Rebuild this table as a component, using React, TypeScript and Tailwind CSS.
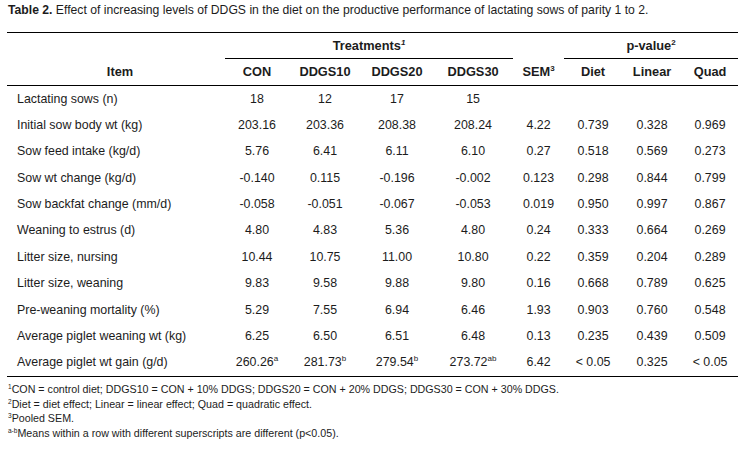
import React from "react";

type Row = {
  item: string;
  values: React.ReactNode[];
};

const sup = (s: string) => (
  <span className="relative -top-[5px] text-[8px] leading-none">{s}</span>
);

const rows: Row[] = [
  { item: "Lactating sows (n)", values: ["18", "12", "17", "15", "", "", "", ""] },
  { item: "Initial sow body wt (kg)", values: ["203.16", "203.36", "208.38", "208.24", "4.22", "0.739", "0.328", "0.969"] },
  { item: "Sow feed intake (kg/d)", values: ["5.76", "6.41", "6.11", "6.10", "0.27", "0.518", "0.569", "0.273"] },
  { item: "Sow wt change (kg/d)", values: ["-0.140", "0.115", "-0.196", "-0.002", "0.123", "0.298", "0.844", "0.799"] },
  { item: "Sow backfat change (mm/d)", values: ["-0.058", "-0.051", "-0.067", "-0.053", "0.019", "0.950", "0.997", "0.867"] },
  { item: "Weaning to estrus (d)", values: ["4.80", "4.83", "5.36", "4.80", "0.24", "0.333", "0.664", "0.269"] },
  { item: "Litter size, nursing", values: ["10.44", "10.75", "11.00", "10.80", "0.22", "0.359", "0.204", "0.289"] },
  { item: "Litter size, weaning", values: ["9.83", "9.58", "9.88", "9.80", "0.16", "0.668", "0.789", "0.625"] },
  { item: "Pre-weaning mortality (%)", values: ["5.29", "7.55", "6.94", "6.46", "1.93", "0.903", "0.760", "0.548"] },
  { item: "Average piglet weaning wt (kg)", values: ["6.25", "6.50", "6.51", "6.48", "0.13", "0.235", "0.439", "0.509"] },
  {
    item: "Average piglet wt gain (g/d)",
    values: [
      <>260.26{sup("a")}</>,
      <>281.73{sup("b")}</>,
      <>279.54{sup("b")}</>,
      <>273.72{sup("ab")}</>,
      "6.42",
      "< 0.05",
      "0.325",
      "< 0.05",
    ],
  },
];

const widths = ["w-[218px]", "w-[64px]", "w-[72px]", "w-[72px]", "w-[80px]", "w-[51px]", "w-[58px]", "w-[60px]", "w-[56px]"];

const fnSup = (s: string) => (
  <span className="relative -top-[4px] text-[6.5px] leading-none">{s}</span>
);

export default function App() {
  return (
    <div
      className="w-[745px] h-[451px] bg-white text-[#1c1c1c] overflow-hidden"
      style={{ fontFamily: '"Liberation Sans", Arial, sans-serif' }}
    >
      <p className="pl-[8px] pt-[3px] text-[12.2px] leading-[14px]">
        <span className="font-bold">Table 2.</span> Effect of increasing levels of DDGS in the diet on the productive
        performance of lactating sows of parity 1 to 2.
      </p>

      <table className="ml-[7px] mt-[15px] w-[731px] table-fixed border-collapse text-[12.4px]">
        <colgroup>
          {widths.map((w, i) => (
            <col key={i} className={w} />
          ))}
        </colgroup>
        <thead>
          <tr className="h-[26px] border-t border-black">
            <th className="p-0"></th>
            <th colSpan={4} className="p-0 font-bold text-[12.8px] text-center align-middle">
              Treatments<span className="relative -top-[5px] text-[8px] italic leading-none">1</span>
            </th>
            <th className="p-0"></th>
            <th colSpan={3} className="p-0 font-bold text-[12.8px] text-center align-middle">
              p-value<span className="relative -top-[5px] text-[8px] leading-none">2</span>
            </th>
          </tr>
          <tr className="h-[27px] border-b border-black">
            <th className="p-0 pl-[8px] font-bold text-[12.8px] text-center">Item</th>
            {["CON", "DDGS10", "DDGS20", "DDGS30"].map((h) => (
              <th key={h} className="p-0 font-bold text-[12.8px] text-center border-t border-black">
                {h}
              </th>
            ))}
            <th className="p-0 font-bold text-[12.8px] text-center">
              SEM<span className="relative -top-[5px] text-[8px] leading-none">3</span>
            </th>
            {["Diet", "Linear", "Quad"].map((h) => (
              <th key={h} className="p-0 font-bold text-[12.8px] text-center border-t border-black">
                {h}
              </th>
            ))}
          </tr>
        </thead>
        <tbody>
          {rows.map((r, ri) => (
            <tr key={ri} className={`${ri === rows.length - 1 ? "h-[27px] border-b border-black" : "h-[26.4px]"}`}>
              <td className="p-0 pl-[10px] text-left whitespace-nowrap">{r.item}</td>
              {r.values.map((v, vi) => (
                <td key={vi} className="p-0 text-center whitespace-nowrap">
                  {v}
                </td>
              ))}
            </tr>
          ))}
        </tbody>
      </table>

      <div className="pl-[8px] pt-[5px] text-[10.7px] leading-[14.6px]">
        <p>
          {fnSup("1")}CON = control diet; DDGS10 = CON + 10% DDGS; DDGS20 = CON + 20% DDGS; DDGS30 = CON + 30% DDGS.
        </p>
        <p>{fnSup("2")}Diet = diet effect; Linear = linear effect; Quad = quadratic effect.</p>
        <p>{fnSup("3")}Pooled SEM.</p>
        <p>{fnSup("a-b")}Means within a row with different superscripts are different (p&lt;0.05).</p>
      </div>
    </div>
  );
}
